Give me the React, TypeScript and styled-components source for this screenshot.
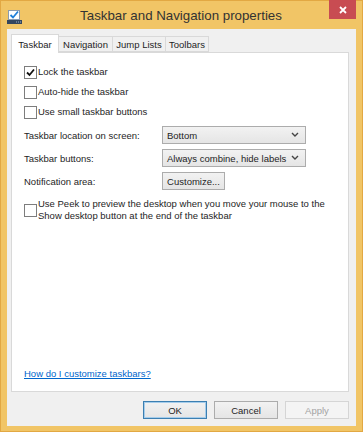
import React, { FC, ReactNode } from "react";
import styled, { createGlobalStyle } from "styled-components";

// Styles
const GlobalStyle = createGlobalStyle`
  html, body {
    margin: 0;
    padding: 0;
    background: #f1c566;
  }
  body {
    font-family: "Liberation Sans", Arial, sans-serif;
    font-size: 9.5px;
    color: #1e1e1e;
  }
`;

const StyledWindow = styled.div`
  width: 363px;
  height: 432px;
  box-sizing: border-box;
  background: #f1c566;
  border: 1px solid #e2a843;
  display: flex;
  flex-direction: column;
`;

const StyledTitleBar = styled.div`
  height: 28px;
  display: flex;
  align-items: center;
  position: relative;
  padding-left: 6px;
`;

const StyledIconWrap = styled.span`
  display: flex;
  margin-top: 4px;
`;

const StyledTitle = styled.div`
  flex: 1;
  text-align: center;
  font-size: 13.3px;
  color: #333333;
  padding-right: 22px;
  padding-top: 1px;
`;

const StyledClose = styled.div`
  position: absolute;
  top: -1px;
  right: 6px;
  width: 27px;
  height: 19px;
  background: #c84c52;
  display: flex;
  align-items: center;
  justify-content: center;
`;

const StyledClient = styled.div`
  flex: 1;
  margin: 0 6px 5px 6px;
  background: #f0f0f0;
  display: flex;
  flex-direction: column;
  padding: 5px 7px 7px 4px;
`;

const StyledTabs = styled.div`
  display: flex;
  align-items: flex-end;
  height: 18px;
  position: relative;
  z-index: 1;
`;

const StyledTab = styled.div<{ $active?: boolean; $w: number }>`
  box-sizing: border-box;
  width: ${(p) => p.$w}px;
  height: ${(p) => (p.$active ? 19 : 16)}px;
  margin-bottom: ${(p) => (p.$active ? -1 : 0)}px;
  border: 1px solid #d9d9d9;
  border-bottom: ${(p) => (p.$active ? "none" : "1px solid #d9d9d9")};
  margin-left: ${(p) => (p.$active ? 0 : -1)}px;
  background: ${(p) => (p.$active ? "#ffffff" : "#f0f0f0")};
  display: flex;
  align-items: center;
  justify-content: center;
  padding-top: ${(p) => (p.$active ? 0 : 1)}px;
`;

const StyledPanel = styled.div`
  flex: 1;
  background: #ffffff;
  border: 1px solid #d9d9d9;
  display: flex;
  flex-direction: column;
  padding: 9px 12px 12px 12px;
`;

const StyledCheckRow = styled.label<{ $multi?: boolean }>`
  display: flex;
  align-items: center;
  gap: 1px;
  height: ${(p) => (p.$multi ? "auto" : "20px")};
  line-height: 12px;
  margin-top: ${(p) => (p.$multi ? "8px" : "0")};
`;

const StyledBox = styled.span`
  width: 13px;
  height: 13px;
  box-sizing: border-box;
  border: 1px solid #7d7d7d;
  background: #ffffff;
  display: flex;
  align-items: center;
  justify-content: center;
  flex-shrink: 0;
`;

const StyledFormGrid = styled.div`
  display: grid;
  grid-template-columns: 138px 144px;
  row-gap: 5px;
  align-items: center;
  margin-top: 4px;
`;

const StyledSelect = styled.div`
  height: 18px;
  box-sizing: border-box;
  border: 1px solid #acacac;
  background: linear-gradient(#f2f2f2, #e5e5e5);
  display: flex;
  align-items: center;
  justify-content: space-between;
  padding: 0 6px 0 4px;
  white-space: nowrap;
`;

const StyledButton = styled.div<{ $primary?: boolean; $disabled?: boolean; $w?: number }>`
  width: ${(p) => p.$w ?? 64}px;
  height: 18px;
  box-sizing: border-box;
  border: 1px solid ${(p) => (p.$primary ? "#3c7fb1" : p.$disabled ? "#d5d5d5" : "#acacac")};
  box-shadow: ${(p) => (p.$primary ? "inset 0 0 0 1px #a6cdeb" : "none")};
  background: ${(p) => (p.$disabled ? "#f4f4f4" : "linear-gradient(#f2f2f2, #e5e5e5)")};
  color: ${(p) => (p.$disabled ? "#a3a3a3" : "#1e1e1e")};
  display: flex;
  align-items: center;
  justify-content: center;
`;

const StyledLink = styled.a`
  margin-top: auto;
  color: #0066cc;
  text-decoration: underline;
`;

const StyledButtonRow = styled.div`
  display: flex;
  justify-content: flex-end;
  gap: 7px;
  margin-top: 9px;
`;

// Parts
const Check: FC = () => (
  <svg width="9" height="9" viewBox="0 0 9 9">
    <path d="M1 4.5 L3.5 7 L8 1.5" fill="none" stroke="#111" strokeWidth="1.8" />
  </svg>
);

const CheckRow: FC<{ checked?: boolean; multi?: boolean; children: ReactNode }> = ({
  checked,
  multi,
  children,
}) => (
  <StyledCheckRow $multi={multi}>
    <StyledBox>{checked && <Check />}</StyledBox>
    <span>{children}</span>
  </StyledCheckRow>
);

const Chevron: FC = () => (
  <svg width="8" height="6" viewBox="0 0 8 6">
    <path d="M1 1 L4 4 L7 1" fill="none" stroke="#444" strokeWidth="1.4" />
  </svg>
);

const AppIcon: FC = () => (
  <svg width="15" height="15" viewBox="0 0 15 15">
    <rect x="1.5" y="0.5" width="11" height="9" fill="#ffffff" stroke="#8a9bb0" />
    <path d="M3.5 5 L6 7.5 L11 1.5" fill="none" stroke="#1f7fd8" strokeWidth="1.8" />
    <rect x="0" y="10" width="15" height="4" fill="#34465e" />
    <rect x="9" y="11.5" width="1" height="1" fill="#9fb3cc" />
    <rect x="11" y="11.5" width="1" height="1" fill="#9fb3cc" />
    <rect x="13" y="11.5" width="1" height="1" fill="#9fb3cc" />
  </svg>
);

const App: FC = () => {
  return (
    <>
      <GlobalStyle />
      <StyledWindow>
        <StyledTitleBar>
          <StyledIconWrap>
            <AppIcon />
          </StyledIconWrap>
          <StyledTitle>Taskbar and Navigation properties</StyledTitle>
          <StyledClose>
            <svg width="8" height="8" viewBox="0 0 8 8">
              <path d="M1 1 L7 7 M7 1 L1 7" stroke="#ffffff" strokeWidth="1.8" />
            </svg>
          </StyledClose>
        </StyledTitleBar>
        <StyledClient>
          <StyledTabs>
            <StyledTab $active $w={48}>Taskbar</StyledTab>
            <StyledTab $w={55}>Navigation</StyledTab>
            <StyledTab $w={54}>Jump Lists</StyledTab>
            <StyledTab $w={44}>Toolbars</StyledTab>
          </StyledTabs>
          <StyledPanel>
            <CheckRow checked>Lock the taskbar</CheckRow>
            <CheckRow>Auto-hide the taskbar</CheckRow>
            <CheckRow>Use small taskbar buttons</CheckRow>
            <StyledFormGrid>
              <span>Taskbar location on screen:</span>
              <StyledSelect>
                <span>Bottom</span>
                <Chevron />
              </StyledSelect>
              <span>Taskbar buttons:</span>
              <StyledSelect>
                <span>Always combine, hide labels</span>
                <Chevron />
              </StyledSelect>
              <span>Notification area:</span>
              <StyledButton $w={63}>Customize...</StyledButton>
            </StyledFormGrid>
            <CheckRow multi>
              Use Peek to preview the desktop when you move your mouse to the
              <br />
              Show desktop button at the end of the taskbar
            </CheckRow>
            <StyledLink>How do I customize taskbars?</StyledLink>
          </StyledPanel>
          <StyledButtonRow>
            <StyledButton $primary>OK</StyledButton>
            <StyledButton>Cancel</StyledButton>
            <StyledButton $disabled>Apply</StyledButton>
          </StyledButtonRow>
        </StyledClient>
      </StyledWindow>
    </>
  );
};

export default App;
